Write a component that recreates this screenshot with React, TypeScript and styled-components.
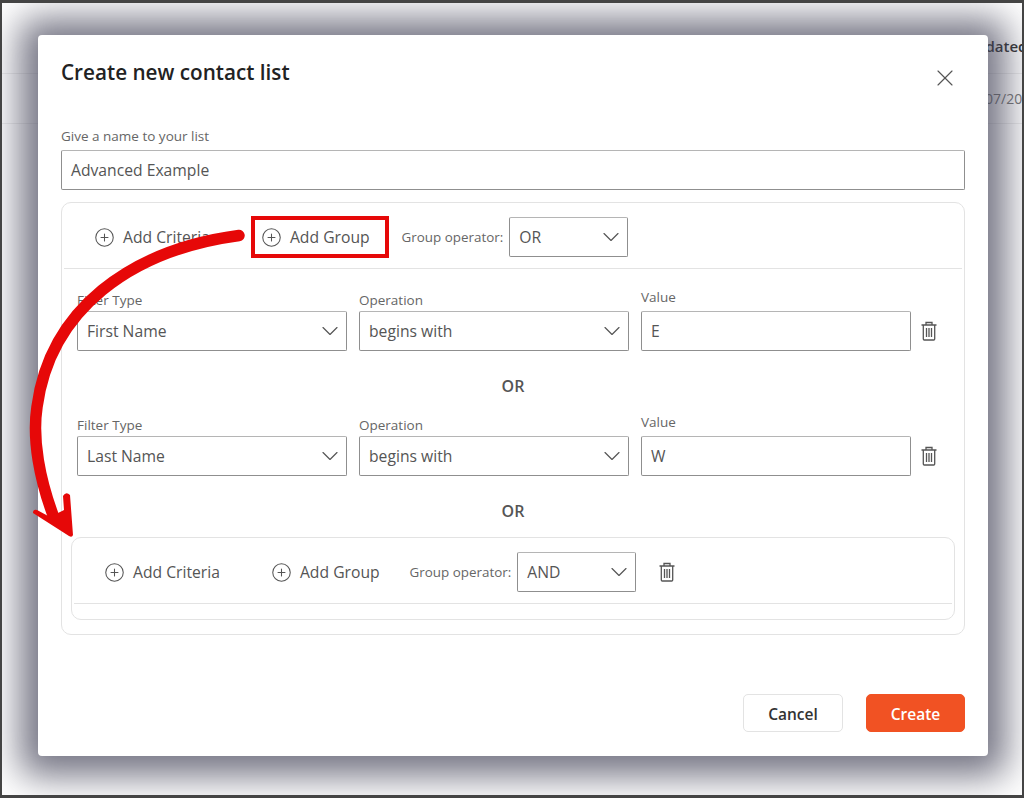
import React from "react";
import styled, { createGlobalStyle } from "styled-components";
import { ChevronDown, CirclePlus, X } from "lucide-react";

const GlobalStyle = createGlobalStyle`
  html, body {
    margin: 0;
    padding: 0;
    background: #fff;
    font-family: "Open Sans", "Noto Sans", sans-serif;
  }
`;

const Page = styled.div`
  position: relative;
  box-sizing: border-box;
  width: 1024px;
  height: 798px;
  border: solid #444;
  border-width: 3px 2px;
  overflow: hidden;
  background: #fff;
`;

const TableHead = styled.div`
  height: 71px;
  box-sizing: border-box;
  padding: 33px 0 0 929px;
  border-bottom: 1px solid #eee;
  font-size: 15px;
  font-weight: 600;
  color: #333;
  white-space: nowrap;
`;

const TableRow = styled.div`
  height: 50px;
  box-sizing: border-box;
  padding: 15px 0 0 983px;
  border-bottom: 1px solid #eee;
  font-size: 14px;
  color: #777;
  white-space: nowrap;
`;

const Modal = styled.div`
  position: absolute;
  left: 36px;
  top: 32px;
  width: 950px;
  height: 721px;
  box-sizing: border-box;
  padding: 23px 23px 24px;
  display: flex;
  flex-direction: column;
  background: #fff;
  border-radius: 4px;
  box-shadow: 0 2px 36px 18px rgba(70, 70, 90, 0.75);
`;

const Header = styled.div`
  display: flex;
  justify-content: space-between;
  align-items: flex-start;
  margin-bottom: 34px;
`;

const Title = styled.h2`
  margin: 0;
  font-size: 20.7px;
  line-height: 28px;
  font-weight: 600;
  color: #222;
`;

const CloseButton = styled.button`
  display: flex;
  padding: 0;
  margin: 6px 6px 0 0;
  border: none;
  background: none;
  color: #555;
`;

const FieldLabel = styled.div<{ $raised?: boolean }>`
  font-size: 13.5px;
  line-height: 18px;
  color: #666;
  margin-bottom: ${(p) => (p.$raised ? "5px" : "2px")};
  margin-top: ${(p) => (p.$raised ? "-3px" : "0")};
`;

const NameLabel = styled(FieldLabel)`
  margin-top: 1px;
  margin-bottom: 5px;
`;

const Field = styled.div`
  box-sizing: border-box;
  display: flex;
  align-items: center;
  justify-content: space-between;
  height: 40px;
  padding: 0 2px 0 9px;
  background: #fff;
  border: 1px solid #8f8f8f;
  border-top-color: #b5b5b5;
  border-radius: 2px;
  font-size: 15.7px;
  color: #555;
`;

const Criteria = styled.div`
  margin-top: 12px;
  border: 1px solid #e3e3e3;
  border-radius: 10px;
  padding-bottom: 14px;
`;

const NestedGroup = styled.div`
  margin: -4px 9px 0;
  border: 1px solid #e3e3e3;
  border-radius: 10px;
  padding-bottom: 15px;
`;

const Toolbar = styled.div`
  display: flex;
  align-items: center;
  height: 66px;
  box-sizing: border-box;
  margin: 0 2px;
  padding: 3px 0 0 19px;
  gap: 23px;
  border-bottom: 1px solid #e3e3e3;
`;

const AddButton = styled.button<{ $marked?: boolean }>`
  box-sizing: border-box;
  display: flex;
  align-items: center;
  gap: 8px;
  height: 42px;
  margin-left: ${(p) => (p.$marked ? "1px" : "0")};
  padding: 0 ${(p) => (p.$marked ? "15px" : "17px")} 0 ${(p) => (p.$marked ? "6px" : "11px")};
  background: #fff;
  border: ${(p) => (p.$marked ? "4px solid #e60808" : "none")};
  font-family: inherit;
  font-size: 15.7px;
  color: #555;
  white-space: nowrap;
`;

const OperatorLabel = styled.span`
  margin-left: -10px;
  margin-right: -17px;
  font-size: 13.4px;
  color: #666;
  white-space: nowrap;
`;

const OperatorSelect = styled(Field)`
  width: 119px;
`;

const Rows = styled.div`
  padding: 22px 0 0 15px;
`;

const FilterRow = styled.div`
  display: grid;
  grid-template-columns: 270px 270px 270px 38px;
  column-gap: 12px;
  margin-bottom: 4px;
`;

const TrashCell = styled.div`
  display: flex;
  align-items: center;
  margin-left: -3px;
  padding-top: 20px;
  color: #555;
`;

const GroupTrash = styled.div`
  display: flex;
  margin-left: -1px;
  color: #555;
`;

const OrText = styled.div`
  height: 61px;
  margin-left: -15px;
  display: flex;
  align-items: center;
  justify-content: center;
  font-size: 16px;
  font-weight: 600;
  color: #555;
`;

const Footer = styled.div`
  margin-top: auto;
  display: flex;
  justify-content: flex-end;
  gap: 23px;
`;

const FooterButton = styled.button<{ $primary?: boolean }>`
  width: ${(p) => (p.$primary ? "99px" : "100px")};
  height: 38px;
  padding: 1px 0 0;
  border-radius: 5px;
  border: 1px solid ${(p) => (p.$primary ? "#f15223" : "#e3e3e3")};
  background: ${(p) => (p.$primary ? "#f15223" : "#fff")};
  color: ${(p) => (p.$primary ? "#fff" : "#333")};
  font-family: inherit;
  font-size: 15.500px;
  font-weight: 600;
`;

const Annotation = styled.svg`
  position: absolute;
  left: -2px;
  top: -3px;
  pointer-events: none;
`;

const TrashIcon = () => (
  <svg width="18" height="20" viewBox="0 0 18 20" fill="none" stroke="currentColor">
    <path d="M1.500 4h15M6 4V1.500h6V4M3.300 4v14c0 .6.4 1 1 1h9.400c.6 0 1-.4 1-1V4" strokeWidth="1.300" />
    <path d="M6.500 7v9M9 7v9M11.500 7v9" strokeWidth="1.300" />
  </svg>
);

const Chevron = () => <ChevronDown size={28} strokeWidth={1} color="#555" />;

const GroupTools = ({ marked }: { marked?: boolean }) => (
  <>
    <AddButton>
      <CirclePlus size={21} strokeWidth={1.2} />
      Add Criteria
    </AddButton>
    <AddButton $marked={marked}>
      <CirclePlus size={21} strokeWidth={1.2} />
      Add Group
    </AddButton>
    <OperatorLabel>Group operator:</OperatorLabel>
  </>
);

const Filter = ({ type, value }: { type: string; value: string }) => (
  <FilterRow>
    <div>
      <FieldLabel>Filter Type</FieldLabel>
      <Field>
        {type}
        <Chevron />
      </Field>
    </div>
    <div>
      <FieldLabel>Operation</FieldLabel>
      <Field>
        begins with
        <Chevron />
      </Field>
    </div>
    <div>
      <FieldLabel $raised>Value</FieldLabel>
      <Field>{value}</Field>
    </div>
    <TrashCell>
      <TrashIcon />
    </TrashCell>
  </FilterRow>
);

export default function App() {
  return (
    <Page>
      <GlobalStyle />
      <TableHead>Last Updated</TableHead>
      <TableRow>07/20/2023</TableRow>
      <Modal>
        <Header>
          <Title>Create new contact list</Title>
          <CloseButton>
            <X size={28} strokeWidth={1} />
          </CloseButton>
        </Header>
        <NameLabel>Give a name to your list</NameLabel>
        <Field>Advanced Example</Field>
        <Criteria>
          <Toolbar>
            <GroupTools marked />
            <OperatorSelect>
              OR
              <Chevron />
            </OperatorSelect>
          </Toolbar>
          <Rows>
            <Filter type="First Name" value="E" />
            <OrText>OR</OrText>
            <Filter type="Last Name" value="W" />
            <OrText>OR</OrText>
          </Rows>
          <NestedGroup>
            <Toolbar>
              <GroupTools />
              <OperatorSelect>
                AND
                <Chevron />
              </OperatorSelect>
              <GroupTrash>
                <TrashIcon />
              </GroupTrash>
            </Toolbar>
          </NestedGroup>
        </Criteria>
        <Footer>
          <FooterButton>Cancel</FooterButton>
          <FooterButton $primary>Create</FooterButton>
        </Footer>
      </Modal>
      <Annotation width="1024" height="798" viewBox="0 0 1024 798" fill="none">
        <path
          d="M239 235.500C130 250 50 310 37 407C32 440 40 480 53 515"
          stroke="#e60808"
          strokeWidth="11.500"
          strokeLinecap="round"
        />
        <path
          d="M33 513Q33 509 37 510L50 517L64 510L63 496Q66 491 70 495L73 535Q72 538 69 536Z"
          fill="#e60808"
        />
      </Annotation>
    </Page>
  );
}
